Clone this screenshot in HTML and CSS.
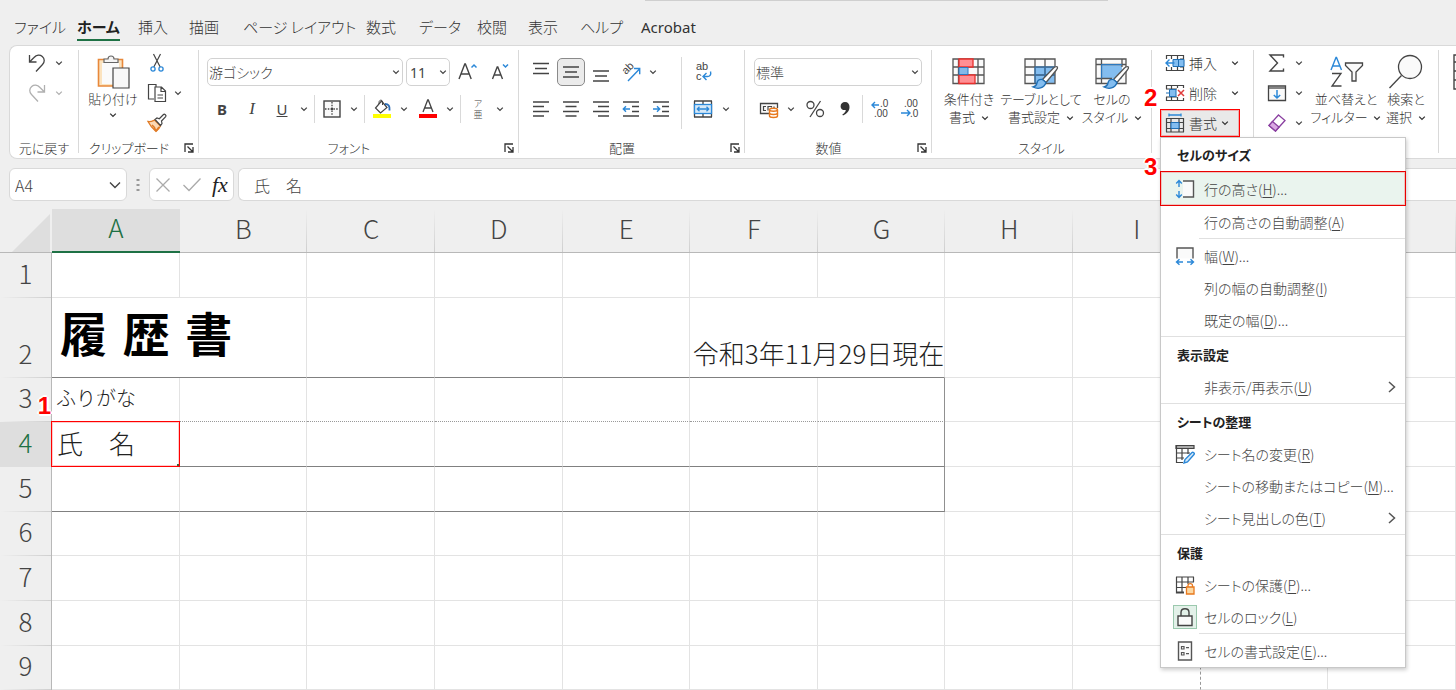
FILE: index.html
```html
<!DOCTYPE html>
<html lang="ja">
<head>
<meta charset="utf-8">
<title>履歴書 - Excel</title>
<link rel="stylesheet" href="styles.css">
</head>
<body>
<svg class="defs" aria-hidden="true">
  <symbol id="chev" viewBox="0 0 8 8"><path d="M1.2 2.6 4 5.4 6.800 2.600" fill="none" stroke="currentColor" stroke-width="1.300"/></symbol>
  <symbol id="launch" viewBox="0 0 10 10"><path d="M1 9V1h8M3.500 3.500 8.500 8.500M9 4v5H4" fill="none" stroke="currentColor" stroke-width="1.300"/></symbol>
  <symbol id="next" viewBox="0 0 8 12"><path d="M1 1l5.500 5L1 11" fill="none" stroke="#555" stroke-width="1.500"/></symbol>
</svg>

<header class="titlebar"><div class="searchbox"></div></header>

<nav class="tabs">
  <a href="#">ファイル</a>
  <a href="#" class="active">ホーム</a>
  <a href="#">挿入</a>
  <a href="#">描画</a>
  <a href="#">ページ レイアウト</a>
  <a href="#">数式</a>
  <a href="#">データ</a>
  <a href="#">校閲</a>
  <a href="#">表示</a>
  <a href="#">ヘルプ</a>
  <a href="#">Acrobat</a>
</nav>

<section class="ribbon">
  <div class="group g-undo">
    <div class="stack">
      <div class="row3">
        <button class="ib" aria-label="元に戻す"><svg width="20" height="20" viewBox="0 0 20 20"><path d="M2.500 2v7h7M2.800 8.800 7 4.500C9.500 1.800 13 1.500 15.300 3.500c2.600 2.300 2.500 5.600.2 8L9 18.500" fill="none" stroke="#444" stroke-width="1.300"/></svg></button>
        <button class="cv" aria-label="元に戻すの一覧"><svg><use href="#chev"/></svg></button>
      </div>
      <div class="row3 off">
        <button class="ib" aria-label="やり直し"><svg width="20" height="20" viewBox="0 0 20 20"><path d="M17.500 2v7h-7M17.200 8.800 13 4.500C10.500 1.800 7 1.500 4.700 3.500c-2.600 2.300-2.500 5.600-.2 8L11 18.500" fill="none" stroke="#b0b0b0" stroke-width="1.300"/></svg></button>
        <button class="cv" aria-label="やり直しの一覧"><svg><use href="#chev"/></svg></button>
      </div>
    </div>
    <div class="glabel"><span>元に戻す</span></div>
  </div>
  <i class="sep"></i>

  <div class="group g-clip">
    <div class="cols">
      <button class="big">
        <svg width="34" height="36" viewBox="0 0 34 36"><path d="M2.500 5.500h24V32h-24z" fill="#fbe3bf" stroke="#e8883a" stroke-width="1.600"/><path d="M6 9h17v21H6z" fill="#fafafa"/><path d="M8 8.500V5h4c0-4 6-4 6 0h4v3.500z" fill="#f4f4f4" stroke="#666" stroke-width="1.200"/><path d="M17 14h16v20H17z" fill="#f8f8f8" stroke="#444" stroke-width="1.200"/></svg>
        <span>貼り付け</span><svg class="c8"><use href="#chev"/></svg>
      </button>
      <div class="stack">
        <div class="row3"><button class="ib" aria-label="切り取り"><svg width="18" height="20" viewBox="0 0 18 20"><path d="M5.500 1l6.700 13M12.500 1 5.800 14" fill="none" stroke="#444" stroke-width="1.200"/><circle cx="5" cy="16" r="2.100" fill="none" stroke="#2b88d8" stroke-width="1.300"/><circle cx="13" cy="16" r="2.100" fill="none" stroke="#2b88d8" stroke-width="1.300"/></svg></button></div>
        <div class="row3"><button class="ib" aria-label="コピー"><svg width="20" height="20" viewBox="0 0 20 20"><path d="M7 16H1.500V1.500H9V4" fill="none" stroke="#444" stroke-width="1.200"/><path d="M8 4h6.500L18.500 8v10.500H8zM14 4v4.500h4.500M10.500 12h5.500M10.500 15h5.500" fill="none" stroke="#444" stroke-width="1.200"/></svg></button><button class="cv" aria-label="コピーの一覧"><svg><use href="#chev"/></svg></button></div>
        <div class="row3"><button class="ib" aria-label="書式のコピー"><svg width="20" height="20" viewBox="0 0 20 20"><path d="M1 8.500c3 .5 4.500-.5 6.500-1.500l6 6c-1 2-2.500 4-4.500 5.500C6 16 3 12.500 1 8.500z" fill="#fbd9b5" stroke="#e07b26" stroke-width="1.300"/><path d="M5 12l3 3M9 18l3-4M7 14.500l2 3" stroke="#e07b26" stroke-width="1.500"/><path d="M8 6.500l2-1.500 2.300.7L16.500 1.500c1-1 3.200.8 2.200 2.200L14.500 8l.5 2.500-1.500 2z" fill="#fff" stroke="#444" stroke-width="1.200"/></svg></button></div>
      </div>
    </div>
    <div class="glabel"><span>クリップボード</span><button class="launch" aria-label="クリップボードの設定"><svg><use href="#launch"/></svg></button></div>
  </div>
  <i class="sep"></i>

  <div class="group g-font">
    <div class="rows">
      <div class="row2 gap3">
        <label class="combo w-font"><select aria-label="フォント"><option>游ゴシック</option></select><svg><use href="#chev"/></svg></label>
        <label class="combo w-size"><select aria-label="フォント サイズ"><option>11</option></select><svg><use href="#chev"/></svg></label>
        <button class="ib" aria-label="フォント サイズの拡大"><svg width="20" height="20" viewBox="0 0 20 20"><path d="M1 17 6.800 2h.6L13.200 17M3.200 12h7.800" fill="none" stroke="#444" stroke-width="1.400"/><path d="M13.500 5.500 16 3l2.500 2.500" fill="none" stroke="#2b88d8" stroke-width="1.500"/></svg></button>
        <button class="ib" aria-label="フォント サイズの縮小"><svg width="20" height="20" viewBox="0 0 20 20"><path d="M1.500 17 6.200 5h.6L11.500 17M3.500 13h6" fill="none" stroke="#444" stroke-width="1.400"/><path d="M12 2.500 14.500 5 17 2.500" fill="none" stroke="#2b88d8" stroke-width="1.500"/></svg></button>
      </div>
      <div class="row2b">
        <button class="ib txt"><b>B</b></button>
        <button class="ib txt serif"><i>I</i></button>
        <button class="ib txt"><u>U</u></button><button class="cv" aria-label="下線の一覧"><svg><use href="#chev"/></svg></button>
        <i class="vs"></i>
        <button class="ib" aria-label="罫線"><svg width="20" height="20" viewBox="0 0 20 20"><rect x="2" y="2" width="16" height="16" fill="#fafafa" stroke="#444" stroke-width="1.400"/><path d="M10 3v14M3 10h14" stroke="#444" stroke-width="1.300" stroke-dasharray="1.500 1.300"/><circle cx="10" cy="10" r="1.200" fill="#444"/></svg></button><button class="cv" aria-label="罫線の一覧"><svg><use href="#chev"/></svg></button>
        <i class="vs"></i>
        <button class="ib" aria-label="塗りつぶしの色"><svg width="20" height="20" viewBox="0 0 20 20"><path d="M9.500 2 15 8.500 8.500 14 3.500 9z" fill="#fff" stroke="#444" stroke-width="1.200"/><path d="M7 5V3.500C7 .5 10.500.5 10.500 3v3" fill="none" stroke="#444"/><path d="M13 5c3.500 0 5 2 4.500 6.500" fill="none" stroke="#2b6cb5" stroke-width="1.900"/><rect x="1" y="15" width="18" height="4" fill="#ff0"/></svg></button><button class="cv" aria-label="塗りつぶしの一覧"><svg><use href="#chev"/></svg></button>
        <button class="ib ml2" aria-label="フォントの色"><svg width="20" height="20" viewBox="0 0 20 20"><path d="M5 13 9.700 1h.6L15 13M6.700 9h6.600" fill="none" stroke="#444" stroke-width="1.300"/><rect x="1" y="15" width="18" height="4" fill="#f00"/></svg></button><button class="cv" aria-label="フォントの色の一覧"><svg><use href="#chev"/></svg></button>
        <i class="vs"></i>
        <button class="ib ruby"><span>ア</span><span>亜</span></button><button class="cv" aria-label="ふりがなの一覧"><svg><use href="#chev"/></svg></button>
      </div>
    </div>
    <div class="glabel"><span>フォント</span><button class="launch" aria-label="フォントの設定"><svg><use href="#launch"/></svg></button></div>
  </div>
  <i class="sep"></i>

  <div class="group g-align">
    <div class="cols">
      <div class="rows">
        <div class="row2">
          <button class="ib" aria-label="上揃え"><svg width="20" height="20" viewBox="0 0 20 20"><path d="M2 1.500h16M4 6.500h12M2 11.500h16" stroke="#444" stroke-width="1.300"/></svg></button>
          <button class="ib on" aria-label="上下中央揃え"><svg width="20" height="20" viewBox="0 0 20 20"><path d="M2 5h16M4 10h12M2 15h16" stroke="#444" stroke-width="1.300"/></svg></button>
          <button class="ib" aria-label="下揃え"><svg width="20" height="20" viewBox="0 0 20 20"><path d="M2 9h16M4 14h12M2 19h16" stroke="#444" stroke-width="1.300"/></svg></button>
          <button class="ib" aria-label="方向"><svg width="24" height="24" viewBox="0 0 24 24"><text transform="translate(7 15) rotate(-45)" font-size="11" fill="#444" class="sv">ab</text><path d="M9 21 20.500 9M15 8.500h5.700v5.700" fill="none" stroke="#2b88d8" stroke-width="1.400"/></svg></button>
          <button class="cv" aria-label="方向の一覧"><svg><use href="#chev"/></svg></button>
        </div>
        <div class="row2b">
          <button class="ib" aria-label="左揃え"><svg width="20" height="20" viewBox="0 0 20 20"><path d="M2 3h16M2 7.500h11M2 12.500h16M2 17h11" stroke="#444" stroke-width="1.300"/></svg></button>
          <button class="ib" aria-label="中央揃え"><svg width="20" height="20" viewBox="0 0 20 20"><path d="M2 3h16M4.500 7.500h11M2 12.500h16M4.500 17h11" stroke="#444" stroke-width="1.300"/></svg></button>
          <button class="ib" aria-label="右揃え"><svg width="20" height="20" viewBox="0 0 20 20"><path d="M2 3h16M7 7.500h11M2 12.500h16M7 17h11" stroke="#444" stroke-width="1.300"/></svg></button>
          <button class="ib" aria-label="インデントを減らす"><svg width="20" height="20" viewBox="0 0 20 20"><path d="M2 3h16M11 7.500h7M11 12.500h7M2 17h16" stroke="#444" stroke-width="1.300"/><path d="M9 10H2.500M5 7.300 2.300 10 5 12.700" fill="none" stroke="#2b88d8" stroke-width="1.400"/></svg></button>
          <button class="ib" aria-label="インデントを増やす"><svg width="20" height="20" viewBox="0 0 20 20"><path d="M2 3h16M11 7.500h7M11 12.500h7M2 17h16" stroke="#444" stroke-width="1.300"/><path d="M2 10h6.500M6 7.300 8.700 10 6 12.700" fill="none" stroke="#2b88d8" stroke-width="1.400"/></svg></button>
        </div>
      </div>
      <i class="vs tall"></i>
      <div class="rows">
        <div class="row2"><button class="ib wide" aria-label="折り返して全体を表示する"><svg width="20" height="24" viewBox="0 0 20 24"><text x="3" y="10" font-size="11" fill="#444" class="sv">ab</text><text x="3" y="20" font-size="11" fill="#444" class="sv">c</text><path d="M17.500 11.500c1 3.500-1 5-3 5h-4M13.500 13l-3.500 3.500 3.500 3.500" fill="none" stroke="#2b88d8" stroke-width="1.400"/></svg></button></div>
        <div class="row2b"><button class="ib wide" aria-label="セルを結合して中央揃え"><svg width="20" height="20" viewBox="0 0 20 20"><path d="M1.500 2v16M18.500 2v16M1 2h18M1 18h18M10 2v3.500M10 14.500V18" stroke="#444" stroke-width="1.300"/><rect x="1.500" y="5.500" width="17" height="9" fill="#d6e9f8" stroke="#2b88d8" stroke-width="1.300"/><path d="M4.500 10h11M6.500 7.800 4.300 10l2.200 2.200M13.500 7.800l2.200 2.200-2.200 2.200" fill="none" stroke="#2b88d8" stroke-width="1.300"/></svg></button><button class="cv" aria-label="結合の一覧"><svg><use href="#chev"/></svg></button></div>
      </div>
    </div>
    <div class="glabel"><span>配置</span><button class="launch" aria-label="配置の設定"><svg><use href="#launch"/></svg></button></div>
  </div>
  <i class="sep"></i>

  <div class="group g-num">
    <div class="rows">
      <div class="row2"><label class="combo w-num"><select aria-label="表示形式"><option>標準</option></select><svg><use href="#chev"/></svg></label></div>
      <div class="row2b">
        <button class="ib" aria-label="通貨表示形式"><svg width="20" height="20" viewBox="0 0 20 20"><path d="M10 14.500H1.500V4.500h17V9" fill="#fafafa" stroke="#444" stroke-width="1.300"/><path d="M7 7.500H4.500v4H7M9 11.500v-4h3.500v1M15 7.500v1.500" fill="none" stroke="#444" stroke-width="1.200"/><path d="M10.500 11v6c0 2 8 2 8 0v-6" fill="#fff" stroke="#e8791e" stroke-width="1.400"/><ellipse cx="14.500" cy="10.800" rx="4" ry="1.500" fill="#fff" stroke="#e8791e" stroke-width="1.400"/><path d="M10.500 14c0 2 8 2 8 0" fill="none" stroke="#e8791e" stroke-width="1.400"/></svg></button><button class="cv" aria-label="通貨の一覧"><svg><use href="#chev"/></svg></button>
        <button class="ib ml2" aria-label="パーセント スタイル"><svg width="20" height="20" viewBox="0 0 20 20"><circle cx="5.500" cy="6" r="3.500" fill="none" stroke="#444" stroke-width="1.300"/><circle cx="15" cy="14" r="3.500" fill="none" stroke="#444" stroke-width="1.300"/><path d="M15.500 2 5 18" stroke="#444" stroke-width="1.300"/></svg></button>
        <button class="ib" aria-label="桁区切りスタイル"><svg width="20" height="20" viewBox="0 0 20 20"><path d="M10 3c3 0 4.500 2 4.500 5 0 4-2.500 6.500-6.500 8.500l-.7-1c2.300-1.500 3.400-3 3.500-4.500C8 11.500 5.600 10 5.600 7.400 5.600 4.800 7.500 3 10 3z" fill="#333"/></svg></button>
        <i class="vs"></i>
        <button class="ib" aria-label="小数点以下の表示桁数を増やす"><svg width="20" height="24" viewBox="0 0 20 24"><path d="M9 8H2M5 5 2 8l3 3" fill="none" stroke="#2b88d8" stroke-width="1.400"/><text x="10" y="10" font-size="10" fill="#444" class="sv">.0</text><text x="4" y="20" font-size="10" fill="#444" class="sv">.00</text></svg></button>
        <button class="ib" aria-label="小数点以下の表示桁数を減らす"><svg width="20" height="24" viewBox="0 0 20 24"><path d="M1 16h9M7 13l3 3-3 3" fill="none" stroke="#2b88d8" stroke-width="1.400"/><text x="4" y="10" font-size="10" fill="#444" class="sv">.00</text><text x="10" y="20" font-size="10" fill="#444" class="sv">.0</text></svg></button>
      </div>
    </div>
    <div class="glabel"><span>数値</span><button class="launch" aria-label="数値の設定"><svg><use href="#launch"/></svg></button></div>
  </div>
  <i class="sep"></i>

  <div class="group g-style">
    <div class="cols">
      <button class="big">
        <svg width="36" height="36" viewBox="0 0 36 36"><path d="M2 5h31v24.500H2zM2 13h31M2 21h31M7.500 5v24.500M27 5v24.500" fill="#fafafa" stroke="#555" stroke-width="1.300"/><path d="M8 5h14v8H8zM8 21h16v8.500H8z" fill="#ff8f94" stroke="#e8302d" stroke-width="1.300"/><path d="M8 13.500h9v7H8z" fill="#83b9e8" stroke="#2b78c0" stroke-width="1"/></svg>
        <span>条件付き</span><span>書式 <svg class="c8"><use href="#chev"/></svg></span>
      </button>
      <button class="big">
        <svg width="36" height="36" viewBox="0 0 36 36"><path d="M2 5h30v24.500H2z" fill="#fafafa"/><path d="M12 13h20v16.500H12z" fill="#83bdf0"/><path d="M2 5h30v24.500H2zM2 13h30M2 21h30M12 5v24.500M22 5v24.500" fill="none" stroke="#555" stroke-width="1.300"/><path d="M12 13h20M12 21h20M12 13v16.500M22 13v16.500" stroke="#2b78c0"/><path d="M34.500 13c-1.500-1-3 0-4 1l-11 11.500 3.500 3 10-12c1-1.200 2-2.500 1.500-3.500z" fill="#fff" stroke="#555" stroke-width="1.300"/><path d="M19.500 25.500c-3-.5-5 1-5.500 3.500-.4 2-1.500 3.500-4 4 5 2.500 11 1.500 13-4.500z" fill="#83bdf0" stroke="#1f6fb5" stroke-width="1.300"/></svg>
        <span>テーブルとして</span><span>書式設定 <svg class="c8"><use href="#chev"/></svg></span>
      </button>
      <button class="big">
        <svg width="36" height="36" viewBox="0 0 36 36"><path d="M2 5h30v24.500H2z" fill="#fafafa"/><path d="M7.500 10.500H28v14H7.500z" fill="#83bdf0"/><path d="M2 5h30v24.500H2zM2 10.500h30M2 24.500h16M7.500 5v24.500M28 5v8" fill="none" stroke="#555" stroke-width="1.300"/><path d="M7.500 24.500v-14H28" fill="none" stroke="#2b78c0"/><path d="M34.500 13c-1.500-1-3 0-4 1l-11 11.500 3.500 3 10-12c1-1.200 2-2.500 1.500-3.500z" fill="#fff" stroke="#555" stroke-width="1.300"/><path d="M19.500 25.500c-3-.5-5 1-5.500 3.500-.4 2-1.500 3.500-4 4 5 2.500 11 1.500 13-4.500z" fill="#83bdf0" stroke="#1f6fb5" stroke-width="1.300"/></svg>
        <span>セルの</span><span>スタイル <svg class="c8"><use href="#chev"/></svg></span>
      </button>
    </div>
    <div class="glabel"><span>スタイル</span></div>
  </div>
  <i class="sep"></i>

  <div class="group g-cells">
    <b class="note n2">2</b>
    <div class="stack">
      <button class="cmd"><svg width="20" height="20" viewBox="0 0 20 20"><path d="M1.500 6V2.500h17V17.500h-17V14M6.500 2.500V6M12.500 2.500V6M6.500 14v3.500M12.500 14v3.500M15 6h3.500M15 14h3.500" fill="none" stroke="#444" stroke-width="1.200"/><path d="M8 6.500h11v7H8z" fill="#83bdf0" stroke="#1f6fb5"/><path d="M13.500 6.500v7" stroke="#1f6fb5"/><path d="M9.500 10H1.500M4.500 6.500 1 10l3.500 3.500" fill="none" stroke="#2b88d8" stroke-width="1.400"/></svg><span>挿入</span><svg class="c8"><use href="#chev"/></svg></button>
      <button class="cmd"><svg width="20" height="20" viewBox="0 0 20 20"><path d="M1.500 6V2.500h17V5M1.500 14v3.500h17V15M6.500 2.500V6M12.500 2.500V5M6.500 14v3.500M12.500 14v3.500M1 6h11M1 14h11" fill="none" stroke="#444" stroke-width="1.200"/><path d="M4.500 6.500h6.500v7H4.500z" fill="#83bdf0" stroke="#1f6fb5"/><path d="M1 10h3.500" stroke="#1f6fb5"/><path d="M13 7l6 6M19 7l-6 6" stroke="#e03c3c" stroke-width="1.500"/></svg><span>削除</span><svg class="c8"><use href="#chev"/></svg></button>
      <div class="anchor">
        <button class="cmd pressed"><svg width="20" height="20" viewBox="0 0 20 20"><path d="M1.500 19V5.500h17V19M1 9.500h18M1 15.500h18M1 19h18M6 5.500V19M14 5.500V19" fill="none" stroke="#444" stroke-width="1.200"/><path d="M6 9.500h8v6H6z" fill="#83bdf0" stroke="#1f6fb5"/><path d="M4 2h12M4 .5v3M16 .5v3" stroke="#2b88d8" stroke-width="1.300"/></svg><span>書式</span><svg class="c8"><use href="#chev"/></svg></button>
        <div class="menu">
          <b class="note n3">3</b>
          <h3>セルのサイズ</h3>
          <button class="mi hot"><svg width="20" height="20" viewBox="0 0 20 20"><path d="M8 2h10.500v16H8" fill="#fafafa" stroke="#555" stroke-width="1.400"/><path d="M4 2v6M4 18v-6M1.200 4.500 4 1.500l2.800 3M1.200 15.500 4 18.500l2.800-3" fill="none" stroke="#2b88d8" stroke-width="1.400"/></svg><span>行の高さ(<u>H</u>)...</span></button>
          <button class="mi"><i></i><span>行の高さの自動調整(<u>A</u>)</span></button>
          <hr class="in">
          <button class="mi"><svg width="20" height="20" viewBox="0 0 20 20"><path d="M2 12.500V2h16v10.500" fill="#fafafa" stroke="#555" stroke-width="1.400"/><path d="M2 16h6M18 16h-6M4.500 13.200 1.500 16l3 2.800M15.500 13.200l3 2.800-3 2.800" fill="none" stroke="#2b88d8" stroke-width="1.400"/></svg><span>幅(<u>W</u>)...</span></button>
          <button class="mi"><i></i><span>列の幅の自動調整(<u>I</u>)</span></button>
          <button class="mi"><i></i><span>既定の幅(<u>D</u>)...</span></button>
          <hr>
          <h3>表示設定</h3>
          <button class="mi"><i></i><span>非表示/再表示(<u>U</u>)</span><svg class="nx"><use href="#next"/></svg></button>
          <hr>
          <h3>シートの整理</h3>
          <button class="mi"><svg width="20" height="20" viewBox="0 0 20 20"><path d="M1 1.500h18v3H1z" fill="#aaa" stroke="#444" stroke-width="1.200"/><path d="M1.500 1.500v17H8M7 4.500V16M13 4.500V10M1.500 9H15M1.500 14H9" fill="none" stroke="#444" stroke-width="1.200"/><path d="M9 19l1-3.500L17 8.500c1-1 3 .8 2 2L12.500 18z" fill="#d6e9f8" stroke="#2b88d8" stroke-width="1.400"/></svg><span>シート名の変更(<u>R</u>)</span></button>
          <button class="mi"><i></i><span>シートの移動またはコピー(<u>M</u>)...</span></button>
          <button class="mi"><i></i><span>シート見出しの色(<u>T</u>)</span><svg class="nx"><use href="#next"/></svg></button>
          <hr>
          <h3>保護</h3>
          <button class="mi"><svg width="20" height="20" viewBox="0 0 20 20"><path d="M1 2h18M1.500 2v16H9M7 2v16M13 2v7M18.500 2v5M1 7h18M1 12.500h10M1 17h8" fill="none" stroke="#444" stroke-width="1.200"/><path d="M11.500 12h7.500v7h-7.500z" fill="#fbd9a5" stroke="#e8791e" stroke-width="1.300"/><path d="M13 12v-1.500c0-2.500 4.500-2.500 4.500 0V12" fill="none" stroke="#e8791e" stroke-width="1.300"/></svg><span>シートの保護(<u>P</u>)...</span></button>
          <button class="mi lock"><svg width="20" height="20" viewBox="0 0 20 20"><path d="M3 9h14v9.500H3z" fill="#fafafa" stroke="#444" stroke-width="1.400"/><path d="M6 9V5.500c0-5 8-5 8 0V9" fill="none" stroke="#444" stroke-width="1.400"/></svg><span>セルのロック(<u>L</u>)</span></button>
          <hr class="in">
          <button class="mi"><svg width="20" height="20" viewBox="0 0 20 20"><path d="M3.500 1h13v18h-13z" fill="#fafafa" stroke="#555" stroke-width="1.400"/><path d="M6.500 5.500h2.500V8H6.500zM6.500 11.500h2.500V14H6.500zM11 6.700h3M11 12.700h3" fill="none" stroke="#555" stroke-width="1.200"/></svg><span>セルの書式設定(<u>E</u>)...</span></button>
        </div>
      </div>
    </div>
    <div class="glabel"></div>
  </div>
  <i class="sep"></i>

  <div class="group g-edit">
    <div class="cols">
      <div class="stack">
        <div class="row3"><button class="ib" aria-label="合計"><svg width="20" height="20" viewBox="0 0 20 20"><path d="M16.500 4.500V2H3l7.500 8L3 18h13.500v-2.500" fill="none" stroke="#444" stroke-width="1.400"/></svg></button><button class="cv" aria-label="合計の一覧"><svg><use href="#chev"/></svg></button></div>
        <div class="row3"><button class="ib" aria-label="フィル"><svg width="20" height="20" viewBox="0 0 20 20"><path d="M1.500 3h17v14.500h-17z" fill="#fafafa" stroke="#444" stroke-width="1.300"/><path d="M1.500 5h17" stroke="#444" stroke-width="1.300"/><path d="M10 7v8M6.800 12l3.200 3 3.200-3" fill="none" stroke="#2b88d8" stroke-width="1.500"/></svg></button><button class="cv" aria-label="フィルの一覧"><svg><use href="#chev"/></svg></button></div>
        <div class="row3"><button class="ib" aria-label="クリア"><svg width="20" height="20" viewBox="0 0 20 20"><path d="M11.500 2l6.500 5.500L8.500 18 2 12.500z" fill="#fff" stroke="#8a3fa0" stroke-width="1.300"/><path d="M5.500 8.500 12 14l-3.500 4L2 12.500z" fill="#d9a8e2" stroke="#8a3fa0" stroke-width="1.300"/></svg></button><button class="cv" aria-label="クリアの一覧"><svg><use href="#chev"/></svg></button></div>
      </div>
      <button class="big">
        <svg width="36" height="36" viewBox="0 0 36 36"><path d="M3 16 8 3.500h.5L13.500 16M4.800 12h7" fill="none" stroke="#2b88d8" stroke-width="1.400"/><path d="M4 19.500h9L4 32h9.500" fill="none" stroke="#444" stroke-width="1.300"/><path d="M17.500 9h17v2.500l-6.500 6.500v9h-4v-9l-6.500-6.500z" fill="#fafafa" stroke="#444" stroke-width="1.300"/></svg>
        <span>並べ替えと</span><span>フィルター <svg class="c8"><use href="#chev"/></svg></span>
      </button>
      <button class="big">
        <svg width="36" height="36" viewBox="0 0 36 36"><circle cx="22" cy="13" r="11.500" fill="#fafafa" stroke="#444" stroke-width="1.300"/><path d="M13.500 21.500 1.500 34" stroke="#444" stroke-width="1.300"/></svg>
        <span>検索と</span><span>選択 <svg class="c8"><use href="#chev"/></svg></span>
      </button>
    </div>
    <div class="glabel"></div>
  </div>
  <i class="sep"></i>
  <div class="group g-more">
    <button class="analyze" aria-label="分析"><svg width="30" height="36" viewBox="0 0 30 36"><path d="M1 1h28v34H1zM1 8h28M1 17h28M1 26h28" fill="#fafafa" stroke="#444" stroke-width="1.400"/></svg></button>
  </div>
</section>

<section class="fbar">
  <label class="namebox"><input aria-label="名前ボックス" value="A4"><svg viewBox="0 0 12 8"><path d="M1 1.500 6 6.500l5-5" fill="none" stroke="#444" stroke-width="1.400"/></svg></label>
  <svg class="dots" width="4" height="14" viewBox="0 0 4 14"><path d="M.5 1h3v2h-3zM.5 6h3v2h-3zM.5 11h3v2h-3z" fill="#999"/></svg>
  <div class="fx">
    <button aria-label="キャンセル"><svg width="16" height="16" viewBox="0 0 16 16"><path d="M1.500 1.500l13 13M14.500 1.500l-13 13" stroke="#aaa" stroke-width="1.300"/></svg></button>
    <button aria-label="入力"><svg width="20" height="16" viewBox="0 0 20 16"><path d="M1.500 8 7 13.500 18.500 1.500" fill="none" stroke="#aaa" stroke-width="1.300"/></svg></button>
    <button class="fn"><i>fx</i></button>
  </div>
  <input class="formula" aria-label="数式バー" value="氏　名">
</section>

<table class="sheet">
  <colgroup><col class="rowhead"><col><col><col><col><col><col><col><col><col><col><col></colgroup>
  <thead>
    <tr><th class="corner"><svg width="38" height="38" viewBox="0 0 38 38"><path d="M38 0v38H0z" fill="#dedede"/></svg></th><th class="sel">A</th><th>B</th><th>C</th><th>D</th><th>E</th><th>F</th><th>G</th><th>H</th><th>I</th><th></th><th></th></tr>
  </thead>
  <tbody>
    <tr><th>1</th><td></td><td></td><td></td><td></td><td></td><td></td><td></td><td></td><td></td><td></td><td></td></tr>
    <tr class="title"><th>2</th><td colspan="2" class="dk"><h1><span>履</span> <span>歴</span> <span>書</span></h1></td><td class="dk"></td><td class="dk"></td><td class="dk"></td><td colspan="2" class="dk date">令和3年11月29日現在</td><td></td><td></td><td></td><td></td></tr>
    <tr><th>3</th><td class="dot kana">ふりがな</td><td class="dot"></td><td class="dot"></td><td class="dot"></td><td class="dot"></td><td class="dot"></td><td class="dot edge"></td><td></td><td></td><td></td><td></td></tr>
    <tr><th class="sel">4<b class="note n1">1</b></th><td class="dk cur">氏　名</td><td class="dk"></td><td class="dk"></td><td class="dk"></td><td class="dk"></td><td class="dk"></td><td class="dk edge"></td><td></td><td></td><td></td><td></td></tr>
    <tr><th>5</th><td class="dk"></td><td class="dk"></td><td class="dk"></td><td class="dk"></td><td class="dk"></td><td class="dk"></td><td class="dk edge"></td><td></td><td></td><td></td><td></td></tr>
    <tr><th>6</th><td></td><td></td><td></td><td></td><td></td><td></td><td></td><td></td><td></td><td></td><td></td></tr>
    <tr><th>7</th><td></td><td></td><td></td><td></td><td></td><td></td><td></td><td></td><td></td><td></td><td></td></tr>
    <tr><th>8</th><td></td><td></td><td></td><td></td><td></td><td></td><td></td><td></td><td></td><td></td><td></td></tr>
    <tr><th>9</th><td></td><td></td><td></td><td></td><td></td><td></td><td></td><td></td><td class="brk"></td><td></td><td></td></tr>
  </tbody>
</table>
</body>
</html>
```

FILE: styles.css
```css
* { box-sizing: border-box; }
body {
  margin: 0;
  background: #efefef;
  color: #444;
  font-family: "Noto Sans CJK JP", "Noto Sans", sans-serif;
  font-size: 14px;
  font-weight: 300;
  font-feature-settings: "palt";
  overflow: hidden;
}
button, select, input { font: inherit; font-feature-settings: inherit; color: inherit; margin: 0; padding: 0; border: 0; background: none; }
button { display: flex; align-items: center; justify-content: center; }
.defs { position: absolute; width: 0; height: 0; }
.sv { font-family: "Liberation Sans", sans-serif; font-weight: 400; }

/* title bar and tabs */
.titlebar { height: 12px; padding: 0 348px 0 645px; }
.searchbox { height: 1px; background: #cfcfcf; }
.tabs {
  display: grid;
  grid-template-columns: 63px 61px 51px 54px 123px 53px 58px 51px 52px 61px auto;
  height: 33px;
  padding: 3px 0 4px 14px;
  font-size: 15px;
  line-height: 24px;
}
.tabs a { justify-self: start; color: #333; text-decoration: none; white-space: nowrap; }
.tabs a:last-child { font-family: "Noto Sans", sans-serif; font-weight: 400; }
.tabs .active { font-weight: 700; color: #222; border-bottom: 2px solid #1e7145; }

/* ribbon */
.ribbon {
  display: flex;
  margin-left: 9px;
  border: 1px solid #d9d9d9;
  border-right: 0;
  border-radius: 8px 0 0 8px;
  background: #fff;
}
.group { display: flex; flex-direction: column; flex: none; position: relative; padding-top: 2px; }
.sep { flex: none; width: 1px; margin: 4px 0 5px; background: #d9d9d9; }
.g-undo { width: 68px; }
.g-clip { width: 119px; }
.g-font { width: 319px; }
.g-align { width: 225px; }
.g-num { width: 186px; }
.g-style { width: 219px; }
.g-cells { width: 101px; }
.g-edit { width: 184px; }
.g-more { flex: 1; overflow: hidden; padding: 7px 0 0 14px; }
.glabel { display: flex; align-items: center; height: 20px; line-height: 20px; white-space: nowrap; font-size: 13px; color: #333; }
.glabel span { flex: 1; text-align: center; }
.launch { width: 19px; height: 20px; }
.launch svg { width: 10px; height: 10px; }
.stack { display: flex; flex-direction: column; height: 90px; }
.row3 { display: flex; align-items: center; height: 30px; }
.rows { display: flex; flex-direction: column; height: 90px; padding-top: 3px; }
.row2 { display: flex; align-items: center; height: 42px; }
.row2b { display: flex; align-items: center; height: 32px; }
.cols { display: flex; height: 90px; }
.gap3 { gap: 3px; }
.ib { flex: none; width: 30px; height: 28px; }
.ib svg, .analyze svg { flex: none; overflow: visible; }
.analyze { width: 30px; height: 38px; }
.cv { flex: none; width: 14px; height: 28px; }
.cv svg, .c8, .combo svg { flex: none; width: 8px; height: 8px; }
.off { color: #b0b0b0; }
.ml2 { margin-left: 2px; }
.vs { flex: none; width: 1px; height: 28px; margin: 0 2px; background: #d9d9d9; }
.tall { height: 72px; margin: 9px 5px 0; }
.on { width: 28px; margin: 0 1px; border: 1px solid #8a8a8a; border-radius: 5px; background: #ebebeb; }
.txt { font-family: "Noto Sans", sans-serif; font-size: 15px; font-weight: 400; }
.serif { font-family: "Liberation Serif", serif; font-size: 17px; }
.ruby { flex-direction: column; font-size: 9px; line-height: 11px; }
.g-undo .stack { padding-left: 12px; }
.g-clip .big { width: 68px; }
.g-clip .big .c8 { margin-top: 3px; }
.g-clip .ib { width: 20px; }
.g-clip .cv { margin-left: 4px; }
.g-font .rows { padding-left: 8px; }
.g-font .ib + .cv + .vs { margin-left: 3px; }
.g-align .rows:first-child { padding-left: 7px; width: 157px; }
.g-align .wide { width: 32px; }
.g-num .rows { padding-left: 9px; }
.combo { display: grid; align-items: center; height: 28px; border: 1px solid #d2d2d2; border-radius: 5px; background: #fff; }
.combo select { grid-area: 1 / 1; width: 100%; appearance: none; font-size: 14px; padding-left: 1px; }
.combo svg { grid-area: 1 / 1; justify-self: end; margin-right: 2px; pointer-events: none; }
.w-font { width: 196px; }
.w-size { width: 44px; }
.w-size select { font-family: "Noto Sans", sans-serif; font-weight: 400; padding-left: 3px; }
.w-num { width: 168px; }
.big { flex-direction: column; justify-content: flex-start; padding-top: 6px; line-height: 18px; font-size: 13px; white-space: nowrap; color: #333; }
.big span .c8 { margin-left: 3px; }
.g-style .cols { display: grid; grid-template-columns: 74px 70px 72px; }
.g-edit .stack { width: 60px; padding-left: 8px; }
.g-edit .big:nth-child(2) { width: 64px; }
.g-edit .big:nth-child(3) { width: 56px; }

.cmd { gap: 4px; height: 30px; margin-left: 13px; justify-content: flex-start; width: 80px; color: #333; }
.cmd .c8 { margin-left: 10px; }
.anchor { position: relative; width: 80px; margin: 1px 0 0 8px; }
.anchor .pressed { width: 80px; height: 28px; margin: 0; padding-left: 4px; border: 1px solid #f00; box-shadow: inset 0 0 0 1px rgba(255, 0, 0, .25); background: #e9e9e9; }
.pressed .c8 { margin-left: 0; }

/* format menu */
.menu { position: absolute; z-index: 5; top: 28px; left: 0; width: 246px; background: #fff; border: 1px solid #c8c8c8; box-shadow: 1px 2px 4px rgba(0, 0, 0, .2); color: #444; }
.menu h3 { margin: 0; padding-left: 16px; height: 33px; line-height: 33px; font-size: 13px; font-weight: 700; color: #222; }
.menu hr { height: 1px; margin: 0 0 1px; border: 0; background: #e0e0e0; }
.menu .in { margin-left: 38px; }
.mi { justify-content: flex-start; gap: 9px; width: 100%; height: 32px; padding-left: 14px; white-space: nowrap; text-align: left; }
.mi > i { width: 20px; }
.mi > svg:first-child { flex: none; }
.mi span { flex: 1; }
.mi u { text-underline-offset: 2px; }
.nx { width: 8px; height: 12px; margin-right: 9px; }
.hot { height: 35px; border: 1px solid #e80000; box-shadow: inset 0 0 0 1px rgba(255, 0, 0, .2); background: #eaf4ee; }
.menu .hot { width: 246px; margin-left: -1px; }
.lock > svg:first-child { width: 24px; height: 24px; padding: 1px; margin: 0 -2px; border: 1px solid #9bc9ae; background: #e3f1e9; }

/* step markers */
.note { position: absolute; z-index: 6; font: bold 24px/24px "Liberation Sans", sans-serif; color: #f00; text-shadow: -2px 0 #fff, 2px 0 #fff, 0 -2px #fff, 0 2px #fff; }
.n1 { right: 0; top: -28px; }
.n2 { left: -8px; top: 40px; }
.n3 { left: -17px; top: 17px; }

/* formula bar */
.fbar { display: flex; align-items: center; padding: 9px 0 8px 9px; }
.namebox, .fx, .formula { height: 33px; border: 1px solid #d9d9d9; border-radius: 6px; background: #fff; }
.namebox { display: grid; align-items: center; width: 118px; }
.namebox input { grid-area: 1 / 1; width: 100%; padding-left: 5px; font-size: 16px; }
.namebox svg { grid-area: 1 / 1; justify-self: end; width: 12px; height: 8px; margin-right: 5px; }
.dots { margin: 0 9px; }
.fx { display: flex; width: 85px; justify-content: space-around; }
.fn { font-family: "Liberation Serif", serif; font-size: 22px; font-weight: 400; color: #222; }
.formula { flex: 1; margin-left: 4px; padding-left: 15px; border-right: 0; border-radius: 6px 0 0 6px; font-size: 16px; font-feature-settings: normal; }

/* sheet */
.sheet { width: 100%; table-layout: fixed; border-collapse: separate; border-spacing: 0; font-size: 26px; line-height: 30px; font-feature-settings: normal; }
.rowhead { width: 52px; }
.sheet th { position: relative; padding: 0 0 6px; font-weight: 300; color: #444; }
.sheet thead th { height: 44px; border-bottom: 1px solid #b8b8b8; background: linear-gradient(#efefef, #cfcfcf) right / 1px 100% no-repeat; }
.sheet thead .sel { border-bottom: 2px solid #1e7145; background: #dedede; color: #1e7145; }
.sheet .corner { padding: 4px 2px 0 12px; line-height: 0; background: none; }
.sheet tbody th { border-right: 1px solid #b8b8b8; background: linear-gradient(to right, #efefef, #cfcfcf) bottom / 100% 1px no-repeat; }
.sheet tbody .sel { background: #dedede; color: #1e7145; }
.sheet td { position: relative; padding: 0 0 3px 5px; background: #fff; border-right: 1px solid #e3e3e3; border-bottom: 1px solid #e3e3e3; color: #222; white-space: nowrap; }
.sheet tbody tr { height: 45px; }
.sheet tbody tr:nth-child(3n) { height: 44px; }
.sheet tbody .title { height: 80px; }
.sheet .title th { vertical-align: bottom; padding-bottom: 10px; }
.sheet h1 { margin: 0; font-size: 47px; line-height: 60px; font-weight: 700; color: #000; }
.sheet .title td { vertical-align: top; padding: 4px 0 0 8px; }
.sheet h1 span { padding-right: 5px; }
.sheet .title .date { vertical-align: bottom; text-align: right; padding: 0 0 9px; }
.sheet .dk { border-bottom-color: #808080; }
.sheet .dot { border-bottom: 1px dotted #999; }
.sheet .edge { border-right-color: #909090; }
.sheet .kana { font-size: 20px; padding-left: 4px; }
.sheet .brk { border-right: 1px dashed #999; }
.cur::after { content: ""; position: absolute; inset: -1px; border: 1px solid #f00; box-shadow: inset 0 0 0 1px rgba(255, 0, 0, .2); }
.cur::before { content: ""; position: absolute; right: -2px; bottom: -2px; width: 4px; height: 4px; background: #1e7145; }
```
